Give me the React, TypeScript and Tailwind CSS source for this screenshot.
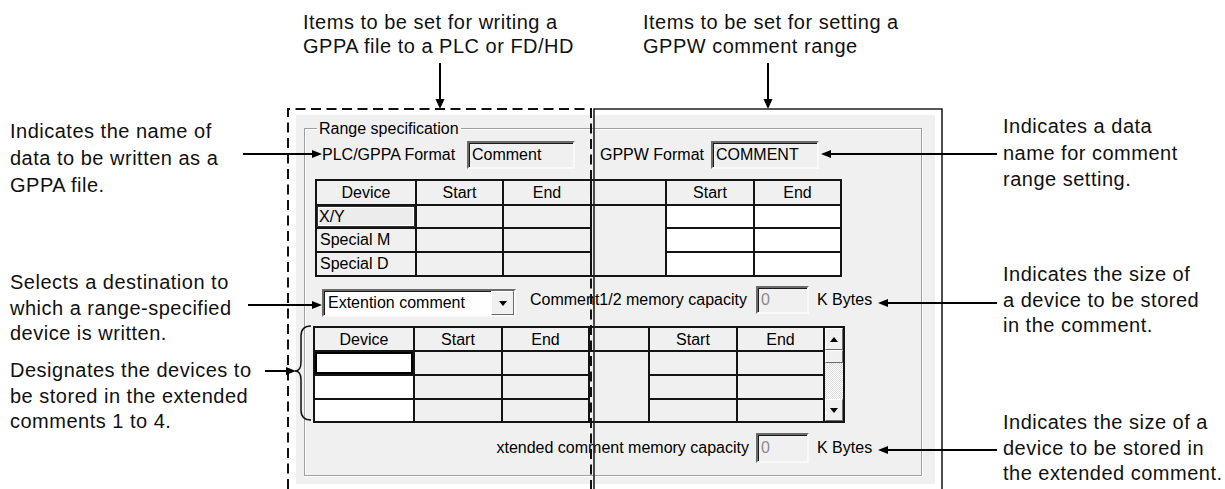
const sunken =
  "border-2 border-t-[#6b6b6b] border-l-[#6b6b6b] border-b-[#fafafa] border-r-[#fafafa] shadow-[inset_1px_1px_0_#1a1a1a]";
const raised =
  "border border-t-white border-l-white border-b-[#6b6b6b] border-r-[#6b6b6b] bg-[#f0f0f0]";

const TriDown = () => (
  <span className="h-0 w-0 border-x-[4px] border-t-[5px] border-x-transparent border-t-black" />
);
const TriUp = () => (
  <span className="h-0 w-0 border-x-[4px] border-b-[5px] border-x-transparent border-b-black" />
);

const Head = ({ label }: { label?: string }) => (
  <div className="flex items-center justify-center bg-[#f0f0f0] pt-[1px]">{label}</div>
);

const Cell = ({ label, white }: { label?: string; white?: boolean }) => (
  <div className={`flex items-center pl-[3px] ${white ? "bg-white" : "bg-[#f0f0f0]"}`}>{label}</div>
);

const ReadOnlyBox = ({ value, w, h, dim }: { value: string; w: string; h: string; dim?: boolean }) => (
  <div className={`${sunken} ${w} ${h} flex items-center bg-[#f0f0f0] pl-[3px] ${dim ? "text-[#8a8a8a]" : "text-black"}`}>
    {value}
  </div>
);

function RangeDialog() {
  return (
    <div className="absolute left-[296px] top-[115px] h-[369px] w-[639px] bg-[#f0f0f0] pl-[8px] pt-[13px] text-[16px] text-black">
      <div className="relative h-[348px] w-[618px] border border-[#a0a0a0] shadow-[inset_1px_1px_0_#fff,1px_1px_0_#fff]">
        <span className="absolute -top-[10px] left-[12px] bg-[#f0f0f0] px-[2px] leading-[20px]">Range specification</span>

        {/* format names */}
        <div className="ml-[17px] mt-[12px] flex items-center">
          <span className="w-[145px] whitespace-nowrap">PLC/GPPA Format</span>
          <ReadOnlyBox value="Comment" w="w-[108px]" h="h-[28px]" />
          <span className="ml-[25px] w-[111px] whitespace-nowrap">GPPW Format</span>
          <ReadOnlyBox value="COMMENT" w="w-[108px]" h="h-[28px]" />
        </div>

        {/* fixed device ranges */}
        <div className="ml-[10px] mt-[10px] grid w-fit grid-cols-[98px_85px_86px_73px_86px_85px] grid-rows-[23px_21px_22px_22px] gap-[2px] border-2 border-[#141414] bg-[#141414] leading-none">
          <div className="col-start-4 row-span-3 row-start-2 bg-[#f0f0f0]" />
          <Head label="Device" />
          <Head label="Start" />
          <Head label="End" />
          <Head />
          <Head label="Start" />
          <Head label="End" />
          <div className="flex items-center bg-[#ececec] pl-[2px] shadow-[inset_0_0_0_1px_#333,inset_0_0_0_2px_#fff]">X/Y</div>
          <Cell />
          <Cell />
          <Cell white />
          <Cell white />
          <Cell label="Special M" />
          <Cell />
          <Cell />
          <Cell white />
          <Cell white />
          <Cell label="Special D" />
          <Cell />
          <Cell />
          <Cell white />
          <Cell white />
        </div>

        {/* destination select */}
        <div className="ml-[17px] mt-[9px] flex items-start">
          <div className={`${sunken} mt-[3px] flex h-[28px] w-[194px] items-stretch bg-white`}>
            <span className="flex flex-1 items-center pl-[4px] whitespace-nowrap">Extention comment</span>
            <span className={`${raised} flex w-[23px] items-center justify-center`}>
              <TriDown />
            </span>
          </div>
          <span className="ml-[14px] flex h-[28px] w-[226px] items-center whitespace-nowrap">Comment1/2 memory capacity</span>
          <ReadOnlyBox value="0" w="w-[53px]" h="h-[28px]" dim />
          <span className="ml-[8px] flex h-[28px] items-center whitespace-nowrap">K Bytes</span>
        </div>

        {/* extended comment devices */}
        <div className="ml-[8px] mt-[9px] grid w-fit grid-cols-[98px_86px_85px_58px_86px_85px_18px] grid-rows-[22px_22px_22px_21px] gap-[2px] border-2 border-[#141414] bg-[#141414] leading-none">
          <div className="col-start-4 row-span-3 row-start-2 bg-[#f0f0f0]" />
          <div className="col-start-7 row-span-4 row-start-1 flex flex-col bg-[#f0f0f0]">
            <span className={`${raised} flex h-[22px] items-center justify-center`}>
              <TriUp />
            </span>
            <span className={`${raised} h-[13px]`} />
            <span className="flex-1 bg-[repeating-conic-gradient(#ffffff_0_25%,#dcdcdc_0_50%)] bg-size-[2px_2px]" />
            <span className={`${raised} flex h-[22px] items-center justify-center`}>
              <TriDown />
            </span>
          </div>
          <Head label="Device" />
          <Head label="Start" />
          <Head label="End" />
          <Head />
          <Head label="Start" />
          <Head label="End" />
          <div className="bg-white shadow-[inset_0_0_0_2px_#000]" />
          <Cell />
          <Cell />
          <Cell />
          <Cell />
          <Cell white />
          <Cell />
          <Cell />
          <Cell />
          <Cell />
          <Cell white />
          <Cell />
          <Cell />
          <Cell />
          <Cell />
        </div>

        {/* extended capacity */}
        <div className="mt-[10px] flex items-center">
          <span className="w-[451px] whitespace-nowrap pr-[7px] text-right">xtended comment memory capacity</span>
          <ReadOnlyBox value="0" w="w-[53px]" h="h-[30px]" dim />
          <span className="ml-[8px] whitespace-nowrap">K Bytes</span>
        </div>
      </div>
    </div>
  );
}

function Leaders() {
  return (
    <svg className="pointer-events-none absolute inset-0" width="1225" height="489" viewBox="0 0 1225 489">
      <path d="M288 489 V109 H591 V489" fill="none" stroke="#111" strokeWidth="2" strokeDasharray="10 5.5" />
      <path d="M594 489 V109 H942 V489" fill="none" stroke="#222" strokeWidth="1.6" />

      <g stroke="#000" strokeWidth="2">
        <line x1="440" y1="63" x2="440" y2="100" />
        <line x1="768" y1="63" x2="768" y2="100" />
        <line x1="243" y1="154" x2="313" y2="154" />
        <line x1="248" y1="305" x2="313" y2="305" />
        <line x1="265" y1="371" x2="287" y2="371" />
        <line x1="997" y1="154" x2="830" y2="154" />
        <line x1="997" y1="303" x2="887" y2="303" />
        <line x1="997" y1="450" x2="887" y2="450" />
      </g>
      <g fill="#000">
        <polygon points="435.5,99 444.5,99 440,109" />
        <polygon points="763.5,99 772.5,99 768,109" />
        <polygon points="312,150 312,158 322,154" />
        <polygon points="312,301 312,309 322,305" />
        <polygon points="286,367 286,375 296,371" />
        <polygon points="831,150 831,158 821,154" />
        <polygon points="888,299 888,307 878,303" />
        <polygon points="888,446 888,454 878,450" />
      </g>
      <path
        d="M311 326 Q301 326 301 336 L301 362 Q301 371 295 371 Q301 371 301 380 L301 410 Q301 420 311 420"
        fill="none"
        stroke="#111"
        strokeWidth="1.5"
      />
    </svg>
  );
}

export default function App() {
  return (
    <div className="relative h-[489px] w-[1225px] overflow-hidden bg-white font-['Liberation_Sans',Arial,sans-serif]">
      <RangeDialog />

      <div className="absolute left-[303px] top-[10px] whitespace-nowrap text-[20px] leading-[24px] tracking-[0.5px] text-[#111]">
        <div>Items to be set for writing a</div>
        <div>GPPA file to a PLC or FD/HD</div>
      </div>
      <div className="absolute left-[643px] top-[10px] whitespace-nowrap text-[20px] leading-[24px] tracking-[0.5px] text-[#111]">
        <div>Items to be set for setting a</div>
        <div>GPPW comment range</div>
      </div>

      <div className="absolute left-[10px] top-[118px] whitespace-nowrap text-[20px] leading-[27px] tracking-[0.5px] text-[#111]">
        <div>Indicates the name of</div>
        <div>data to be written as a</div>
        <div>GPPA file.</div>
      </div>
      <div className="absolute left-[10px] top-[270px] whitespace-nowrap text-[20px] leading-[25.5px] tracking-[0.5px] text-[#111]">
        <div>Selects a destination to</div>
        <div>which a range-specified</div>
        <div>device is written.</div>
      </div>
      <div className="absolute left-[10px] top-[358px] whitespace-nowrap text-[20px] leading-[25.5px] tracking-[0.5px] text-[#111]">
        <div>Designates the devices to</div>
        <div>be stored in the extended</div>
        <div>comments 1 to 4.</div>
      </div>

      <div className="absolute left-[1003px] top-[113px] whitespace-nowrap text-[20px] leading-[26.5px] tracking-[0.5px] text-[#111]">
        <div>Indicates a data</div>
        <div>name for comment</div>
        <div>range setting.</div>
      </div>
      <div className="absolute left-[1003px] top-[262px] whitespace-nowrap text-[20px] leading-[25.7px] tracking-[0.5px] text-[#111]">
        <div>Indicates the size of</div>
        <div>a device to be stored</div>
        <div>in the comment.</div>
      </div>
      <div className="absolute left-[1003px] top-[410px] whitespace-nowrap text-[20px] leading-[25.7px] tracking-[0.5px] text-[#111]">
        <div>Indicates the size of a</div>
        <div>device to be stored in</div>
        <div>the extended comment.</div>
      </div>

      <Leaders />
    </div>
  );
}
